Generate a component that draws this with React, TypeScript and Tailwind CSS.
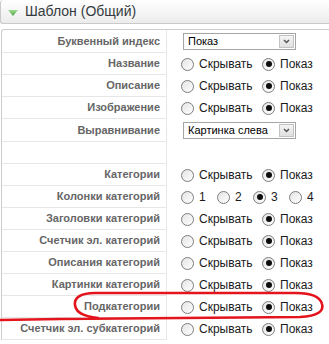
import React from "react";

const font = { fontFamily: '"Liberation Sans", Arial, sans-serif' };

function Radio({ checked }: { checked?: boolean }) {
  return (
    <span className="relative inline-flex h-[13px] w-[13px] shrink-0 items-center justify-center rounded-full border border-[#7c7c7c] bg-gradient-to-br from-[#e4e4e4] to-white">
      {checked && <span className="h-[6px] w-[6px] rounded-full bg-[#0d0d0d]" />}
    </span>
  );
}

function Opt({ label, checked, w }: { label: string; checked?: boolean; w: string }) {
  return (
    <span className={`inline-flex items-center ${w}`}>
      <Radio checked={checked} />
      <span className="ml-[5px] text-[12px] text-[#1a1a1a]">{label}</span>
    </span>
  );
}

function ShowHide() {
  return (
    <div className="flex items-center pl-[14px]">
      <Opt label="Скрывать" w="w-[81px]" />
      <Opt label="Показ" checked w="w-[60px]" />
    </div>
  );
}

function Select({ value }: { value: string }) {
  return (
    <div className="ml-[16px] flex h-[17px] w-[113px] items-center border border-[#a5a5a5] bg-white">
      <span className="flex-1 pl-[4px] text-[11px] leading-none text-black">{value}</span>
      <span className="mr-[1px] flex h-[13px] w-[15px] items-center justify-center border border-[#c3c3c3] bg-gradient-to-b from-[#f4f4f4] to-[#e0e0e0]">
        <svg width="7" height="5" viewBox="0 0 7 5">
          <path d="M1 1 L3.5 3.5 L6 1" stroke="#555" strokeWidth="1.5" fill="none" />
        </svg>
      </span>
    </div>
  );
}

type Row = { label: string; value: React.ReactNode; h?: string };

export default function App() {
  const rows: Row[] = [
    { label: "Буквенный индекс", value: <Select value="Показ" />, h: "h-[23px]" },
    { label: "Название", value: <ShowHide /> },
    { label: "Описание", value: <ShowHide /> },
    { label: "Изображение", value: <ShowHide /> },
    { label: "Выравнивание", value: <Select value="Картинка слева" />, h: "h-[23px]" },
    { label: "", value: null },
    { label: "Категории", value: <ShowHide /> },
    {
      label: "Колонки категорий",
      value: (
        <div className="flex items-center pl-[14px]">
          <Opt label="1" w="w-[36px]" />
          <Opt label="2" w="w-[36px]" />
          <Opt label="3" checked w="w-[36px]" />
          <Opt label="4" w="w-[36px]" />
        </div>
      ),
    },
    { label: "Заголовки категорий", value: <ShowHide /> },
    { label: "Счетчик эл. категорий", value: <ShowHide /> },
    { label: "Описания категорий", value: <ShowHide /> },
    { label: "Картинки категорий", value: <ShowHide /> },
    { label: "Подкатегории", value: <ShowHide /> },
    { label: "Счетчик эл. субкатегорий", value: <ShowHide /> },
  ];

  return (
    <div className="relative h-[344px] w-[329px] overflow-hidden bg-white" style={font}>
      <div className="w-[360px]">
        <div className="flex h-[24px] items-center rounded-l-[3px] border-b border-l border-[#c9c9c9] bg-gradient-to-b from-white to-[#ececec]">
          <svg width="10" height="6" viewBox="0 0 10 6" className="ml-[7px] mt-[2px]">
            <defs>
              <linearGradient id="g" x1="0" y1="0" x2="0" y2="1">
                <stop offset="0" stopColor="#9fdc8f" />
                <stop offset="1" stopColor="#4fa24a" />
              </linearGradient>
            </defs>
            <path d="M0 0 L10 0 L5 6 Z" fill="url(#g)" />
          </svg>
          <span className="ml-[7px] text-[14px] text-[#353a40]">Шаблон (Общий)</span>
        </div>
        <div className="mt-[5px] ml-[1px] rounded-tl-[3px] border-l border-t border-[#cdcdcd]">
          {rows.map((r, i) => (
            <div key={i} className={`flex ${r.h ?? "h-[22px]"}`}>
              <div className="flex w-[165px] shrink-0 items-center justify-end border-b border-r border-[#e6e6e6] pr-[6px] text-[11px] font-bold text-[#666]">
                {r.label}
              </div>
              <div className="flex items-center">{r.value}</div>
            </div>
          ))}
        </div>
      </div>
      <svg className="pointer-events-none absolute left-0 top-0" width="329" height="344" viewBox="0 0 329 344">
        <path
          d="M0 320 L60 319 C120 318 240 318 300 317 C318 316 324 311 322 304 C320 296 310 293 296 293 L95 293 C80 293 74 298 75 305 C76 312 82 316 98 318"
          stroke="#e3141c"
          strokeWidth="2.6"
          fill="none"
          strokeLinecap="round"
        />
      </svg>
    </div>
  );
}
